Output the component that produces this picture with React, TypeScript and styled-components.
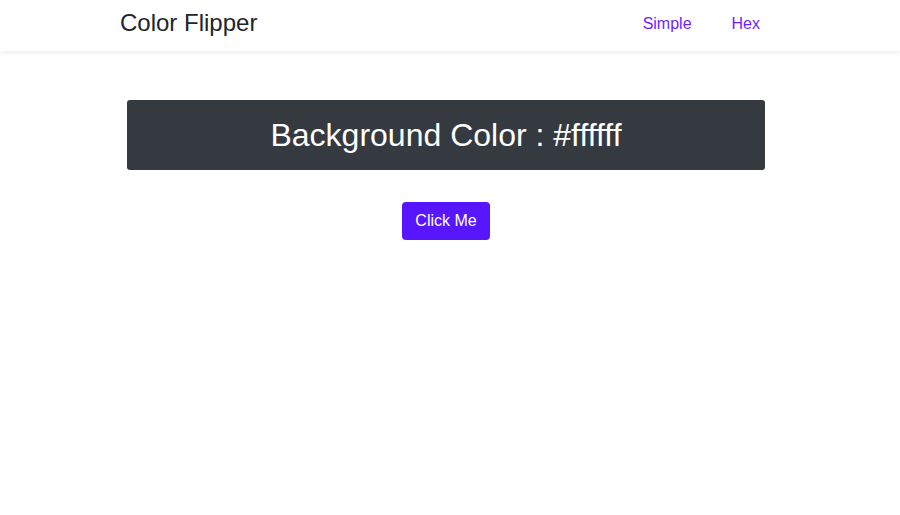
import React, { useState } from "react"
import styled, { createGlobalStyle } from "styled-components"

const GlobalStyle = createGlobalStyle`
    * { box-sizing: border-box; }
    body {
        margin: 0;
        font-family: 'Liberation Sans', Arial, sans-serif;
        color: #212529;
        background: #fff;
    }
`

const NavBar = styled.nav`
    height: 51px;
    background: #fff;
    box-shadow: 0 1px 5px rgba(0, 0, 0, 0.09);
`

const NavContainer = styled.div`
    width: 720px;
    margin: 0 auto;
    padding: 0 50px 0 30px;
    height: 100%;
    display: flex;
    align-items: center;
    justify-content: space-between;
`

const Brand = styled.a`
    font-size: 24px;
    color: #212529;
    text-decoration: none;
    margin-top: -6px;
`

const NavLinks = styled.ul`
    list-style: none;
    display: flex;
    gap: 40px;
    margin: -3px 0 0 0;
    padding: 0;
`

const NavLink = styled.a`
    font-size: 16px;
    color: #6f1ffc;
    text-decoration: none;
    cursor: pointer;
`

const Main = styled.main`
    width: 638px;
    margin: 49px 0 0 127px;
    display: flex;
    flex-direction: column;
    align-items: center;
`

const ColorBanner = styled.h2`
    width: 100%;
    height: 70px;
    margin: 0;
    background: #343a40;
    color: #fff;
    border-radius: 3px;
    font-size: 32px;
    font-weight: normal;
    display: flex;
    align-items: center;
    justify-content: center;
`

const FlipButton = styled.button`
    margin-top: 32px;
    height: 38px;
    padding: 0 13px;
    border: none;
    border-radius: 4px;
    background: #5716fe;
    color: #fff;
    font-family: 'Liberation Sans', Arial, sans-serif;
    font-size: 16px;
    cursor: pointer;
`

const hexChars = "0123456789abcdef"

function randomHex() {
    let hex = "#"
    for (let i = 0; i < 6; i++) {
        hex += hexChars[Math.floor(Math.random() * 16)]
    }
    return hex
}

export default function App() {
    const [color, setColor] = useState("#ffffff")

    return <>
        <GlobalStyle />
        <NavBar>
            <NavContainer>
                <Brand href="#">Color Flipper</Brand>
                <NavLinks>
                    <li><NavLink>Simple</NavLink></li>
                    <li><NavLink>Hex</NavLink></li>
                </NavLinks>
            </NavContainer>
        </NavBar>
        <Main>
            <ColorBanner>Background Color : {color}</ColorBanner>
            <FlipButton onClick={() => setColor(randomHex())}>Click Me</FlipButton>
        </Main>
    </>
}
